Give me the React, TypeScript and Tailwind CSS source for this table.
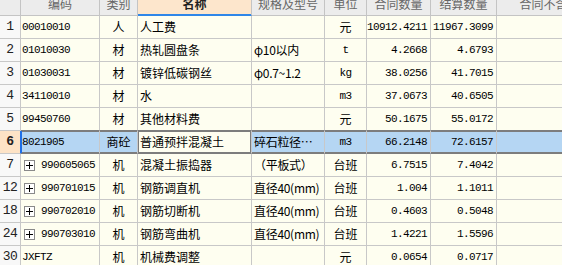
import React from 'react'

type Row = {
  no: string
  code: string
  type: string
  name: string
  spec: string
  unit: string
  qty: string
  settle: string
  tree?: boolean
}

const rows: Row[] = [
  { no: '1', code: '00010010', type: '人', name: '人工费', spec: '', unit: '元', qty: '10912.4211', settle: '11967.3099' },
  { no: '2', code: '01010030', type: '材', name: '热轧圆盘条', spec: 'φ10以内', unit: 't', qty: '4.2668', settle: '4.6793' },
  { no: '3', code: '01030031', type: '材', name: '镀锌低碳钢丝', spec: 'φ0.7~1.2', unit: 'kg', qty: '38.0256', settle: '41.7015' },
  { no: '4', code: '34110010', type: '材', name: '水', spec: '', unit: 'm3', qty: '37.0673', settle: '40.6505' },
  { no: '5', code: '99450760', type: '材', name: '其他材料费', spec: '', unit: '元', qty: '50.1675', settle: '55.0172' },
  { no: '6', code: '8021905', type: '商砼', name: '普通预拌混凝土', spec: '碎石粒径…', unit: 'm3', qty: '66.2148', settle: '72.6157' },
  { no: '7', code: '990605065', type: '机', name: '混凝土振捣器', spec: '（平板式）', unit: '台班', qty: '6.7515', settle: '7.4042', tree: true },
  { no: '12', code: '990701015', type: '机', name: '钢筋调直机', spec: '直径40(mm)', unit: '台班', qty: '1.004', settle: '1.1011', tree: true },
  { no: '18', code: '990702010', type: '机', name: '钢筋切断机', spec: '直径40(mm)', unit: '台班', qty: '0.4603', settle: '0.5048', tree: true },
  { no: '24', code: '990703010', type: '机', name: '钢筋弯曲机', spec: '直径40(mm)', unit: '台班', qty: '1.4221', settle: '1.5596', tree: true },
  { no: '30', code: 'JXFTZ', type: '机', name: '机械费调整', spec: '', unit: '元', qty: '0.0654', settle: '0.0717' },
]

const SEL = 5

const cjk = "font-['Noto_Sans_CJK_SC',sans-serif] text-[12px]"
const mono = "font-['Liberation_Mono','Noto_Sans_CJK_SC',monospace] text-[11px] tracking-[-0.6px]"

const headers = ['', '编码', '类别', '名称', '规格及型号', '单位', '合同数量', '结算数量', '合同不含税单价']

export default function App() {
  return (
    <div className="w-[562px] h-[265px] overflow-hidden bg-[#fefef0] text-black">
      <div className="grid grid-cols-[21px_79px_38px_114px_73px_42px_64px_66px_130px] w-max">
        {headers.map((h, i) => (
          <div
            key={h + i}
            className={`h-[16px] overflow-hidden flex justify-center border-r border-b ${
              i === 3
                ? 'bg-[#fde6cc] border-b-[#2f86e8] shadow-[inset_0_-1px_0_#2f86e8] border-r-[#c4c4c4] text-[#222] font-bold'
                : 'bg-[#ececec] border-[#c4c4c4] text-[#666]'
            }`}
          >
            <span className={`${cjk} leading-[14px] -mt-[3px]`}>{h}</span>
          </div>
        ))}

        {rows.map((r, ri) => {
          const sel = ri === SEL
          const beforeSel = ri === SEL - 1
          const bottom = beforeSel || sel ? 'border-b-[#7d7d7d]' : 'border-b-[#c8c8c8]'
          const rowBg = sel ? 'bg-[#b5d6f3]' : 'bg-[#fefef0]'
          const selShadow = sel ? 'shadow-[inset_0_1px_0_#7d7d7d,inset_0_-1px_0_#7d7d7d]' : ''
          const cell = `h-[23px] flex items-center border-r border-b border-r-[#c8c8c8] ${bottom} overflow-hidden whitespace-nowrap`
          return (
            <React.Fragment key={r.no}>
              <div
                className={`h-[23px] flex items-center justify-center border-r border-b border-b-[#c8c8c8] ${
                  sel
                    ? 'bg-[#fde3c6] border-r-[#1f6fe6] font-bold'
                    : 'bg-[#f8f8f8] border-r-[#c8c8c8]'
                } font-['Liberation_Mono',monospace] text-[13px] tracking-[-0.5px] text-[#222]`}
              >
                {r.no}
              </div>
              <div
                className={`${cell} ${rowBg} pl-[1px] ${
                  sel ? 'shadow-[inset_1px_0_0_#1f6fe6,inset_0_1px_0_#7d7d7d,inset_0_-1px_0_#7d7d7d]' : ''
                }`}
              >
                {r.tree && (
                  <span className="ml-[2px] mr-[6px] w-[11px] h-[11px] border border-[#8a8a8a] bg-white flex items-center justify-center">
                    <svg width="9" height="9" viewBox="0 0 9 9">
                      <path d="M1 4.5H8M4.5 1V8" stroke="#000" strokeWidth="1" />
                    </svg>
                  </span>
                )}
                <span className={mono}>{r.code}</span>
              </div>
              <div className={`${cell} ${rowBg} ${selShadow} justify-center ${sel ? 'border-r-[#7d7d7d]' : ''}`}>
                <span className={cjk}>{r.type}</span>
              </div>
              <div
                className={`${cell} pl-[2px] ${
                  sel
                    ? 'bg-[#fefef0] border-r-[#7d7d7d] shadow-[inset_1px_0_0_#7d7d7d,inset_-1px_0_0_#7d7d7d,inset_0_1px_0_#7d7d7d,inset_0_-1px_0_#7d7d7d]'
                    : 'bg-[#fefef0]'
                }`}
              >
                <span className={cjk}>{r.name}</span>
              </div>
              <div className={`${cell} ${rowBg} ${selShadow} pl-[2px]`}>
                <span className={`${cjk} tracking-[-0.3px]`}>{r.spec}</span>
              </div>
              <div className={`${cell} ${rowBg} ${selShadow} justify-center`}>
                <span className={/^[a-z0-9]+$/.test(r.unit) ? mono : cjk}>{r.unit}</span>
              </div>
              <div className={`${cell} ${rowBg} ${selShadow} justify-end pr-[3px]`}>
                <span className={mono}>{r.qty}</span>
              </div>
              <div className={`${cell} ${rowBg} ${selShadow} justify-end pr-[3px]`}>
                <span className={mono}>{r.settle}</span>
              </div>
              <div className={`${cell} ${rowBg} ${selShadow}`} />
            </React.Fragment>
          )
        })}
      </div>
    </div>
  )
}
